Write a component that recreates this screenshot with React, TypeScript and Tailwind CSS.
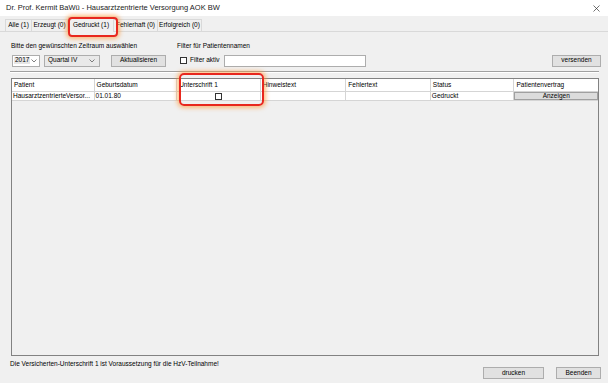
import React from "react";

const cols = [
  { t: "Patient", w: 83 },
  { t: "Geburtsdatum", w: 83 },
  { t: "Unterschrift 1", w: 84 },
  { t: "Hinweistext", w: 86 },
  { t: "Fehlertext", w: 85 },
  { t: "Status", w: 84 },
  { t: "Patientenvertrag", w: 84 },
];

function Chevron() {
  return (
    <svg width="6" height="4" viewBox="0 0 6 4" className="shrink-0">
      <path d="M0.5 0.5 L3 3 L5.5 0.5" fill="none" stroke="#606060" strokeWidth="0.8" />
    </svg>
  );
}

export default function App() {
  const tabs = [
    { t: "Alle (1)", w: 27 },
    { t: "Erzeugt (0)", w: 37 },
    { t: "Gedruckt (1)", w: 46, active: true },
    { t: "Fehlerhaft (0)", w: 45 },
    { t: "Erfolgreich (0)", w: 45 },
  ];
  return (
    <div
      className="relative w-[608px] h-[383px] overflow-hidden bg-[#f0f0f0] text-[6.5px] text-[#000] leading-none"
      style={{ fontFamily: '"Liberation Sans", Arial, sans-serif' }}
    >
      {/* title bar */}
      <div className="h-[16px] bg-white flex items-center justify-between pl-[6px] pr-[8px]">
        <span className="text-[7.5px] text-[#222]">Dr. Prof. Kermit BaWü - Hausarztzentrierte Versorgung AOK BW</span>
        <svg width="7" height="7" viewBox="0 0 7 7">
          <path d="M0.5 0.5 L6.5 6.5 M6.5 0.5 L0.5 6.5" stroke="#333" strokeWidth="0.7" />
        </svg>
      </div>

      {/* tabs */}
      <div className="h-[16px] flex items-end pl-[5px] border-b border-[#d9d9d9]">
        {tabs.map((tb) => (
          <div
            key={tb.t}
            style={{ width: tb.w }}
            className={
              tb.active
                ? "h-[15px] -mb-px bg-[#f0f0f0] border border-b-0 border-[#d9d9d9] flex items-center justify-center"
                : "h-[12px] bg-[#f0f0f0] border border-b-0 border-[#d9d9d9] -ml-px first:ml-0 flex items-center justify-center"
            }
          >
            {tb.t}
          </div>
        ))}
      </div>

      {/* content */}
      <div className="px-[10px] pt-[10px]">
        <div className="flex h-[8px] items-center">
          <span className="w-[167px] pl-[1px]">Bitte den gewünschten Zeitraum auswählen</span>
          <span>Filter für Patientennamen</span>
        </div>
        <div className="flex items-center h-[13px] mt-[4px]">
          <div className="ml-[2px] w-[28px] h-[12px] bg-white border border-[#adadad] flex items-center justify-between pl-[1px] pr-[2px]">
            <span className="bg-[#e6e6e6] px-[1px]">2017</span>
            <Chevron />
          </div>
          <div className="ml-[4px] w-[56px] h-[12px] bg-[#e9e9e9] border border-[#adadad] flex items-center justify-between pl-[3px] pr-[4px]">
            <span>Quartal IV</span>
            <Chevron />
          </div>
          <div className="ml-[11px] w-[55px] h-[12px] bg-[#e1e1e1] border border-[#adadad] flex items-center justify-center">
            Aktualisieren
          </div>
          <div className="ml-[14px] w-[7px] h-[7px] bg-white border border-[#333]" />
          <span className="ml-[3px]">Filter aktiv</span>
          <div className="ml-[4px] w-[142px] h-[12px] bg-white border border-[#adadad]" />
          <div className="ml-auto mr-[-3px] w-[49px] h-[12px] bg-[#e1e1e1] border border-[#adadad] flex items-center justify-center">
            versenden
          </div>
        </div>
        <div className="mt-[4px] h-[2px] border-t border-[#a0a0a0] border-b border-b-white mr-[-1px]" />

        {/* table */}
        <div className="mt-[5px] ml-[1px] mr-[-1px] h-[278px] border border-[#828282] bg-[#f0f0f0] flex flex-col">
          <div className="flex h-[12px] bg-white">
            {cols.map((c, i) => (
              <div
                key={c.t}
                style={{ width: c.w }}
                className={"h-full flex items-center pl-[2px] border-[#d5d5d5] " + (i < cols.length - 1 ? "border-r" : "")}
              >
                {c.t}
              </div>
            ))}
          </div>
          <div className="flex h-[10px] bg-white border-t border-b border-[#d5d5d5]">
            <div style={{ width: 83 }} className="h-full border-r border-[#d5d5d5] flex items-center pl-[1px] whitespace-nowrap overflow-hidden">
              HausarztzentrierteVersor...
            </div>
            <div style={{ width: 83 }} className="h-full border-r border-[#d5d5d5] flex items-center pl-[1px]">
              01.01.80
            </div>
            <div style={{ width: 84 }} className="h-full border-r border-[#d5d5d5] flex items-center justify-center">
              <div className="w-[7px] h-[7px] bg-white border border-[#333]" />
            </div>
            <div style={{ width: 86 }} className="h-full border-r border-[#d5d5d5]" />
            <div style={{ width: 85 }} className="h-full border-r border-[#d5d5d5]" />
            <div style={{ width: 84 }} className="h-full border-r border-[#d5d5d5] flex items-center pl-[1px]">
              Gedruckt
            </div>
            <div style={{ width: 84 }} className="h-full bg-[#dcdcdc] border border-[#a0a0a0] flex items-center justify-center">
              Anzeigen
            </div>
          </div>
        </div>

        <div className="mt-[4px] h-[8px] flex items-center">Die Versicherten-Unterschrift 1 ist Voraussetzung für die HzV-Teilnahme!</div>
        <div className="flex justify-end mt-[-1px] mr-[-3px]">
          <div className="w-[61px] h-[12px] bg-[#e1e1e1] border border-[#adadad] flex items-center justify-center">drucken</div>
          <div className="ml-[12px] w-[45px] h-[12px] bg-[#e1e1e1] border border-[#adadad] flex items-center justify-center">Beenden</div>
        </div>
      </div>

      {/* red highlight overlays */}
      <div className="absolute left-[68px] top-[17px] w-[50px] h-[20px] rounded-[4px] border-2 border-[#e8281e] shadow-[0_0_4px_2px_rgba(255,150,50,0.6)]" />
      <div className="absolute left-[179px] top-[73px] w-[85px] h-[33px] rounded-[5px] border-2 border-[#e8281e] shadow-[0_0_4px_2px_rgba(255,150,50,0.6)]" />
    </div>
  );
}
